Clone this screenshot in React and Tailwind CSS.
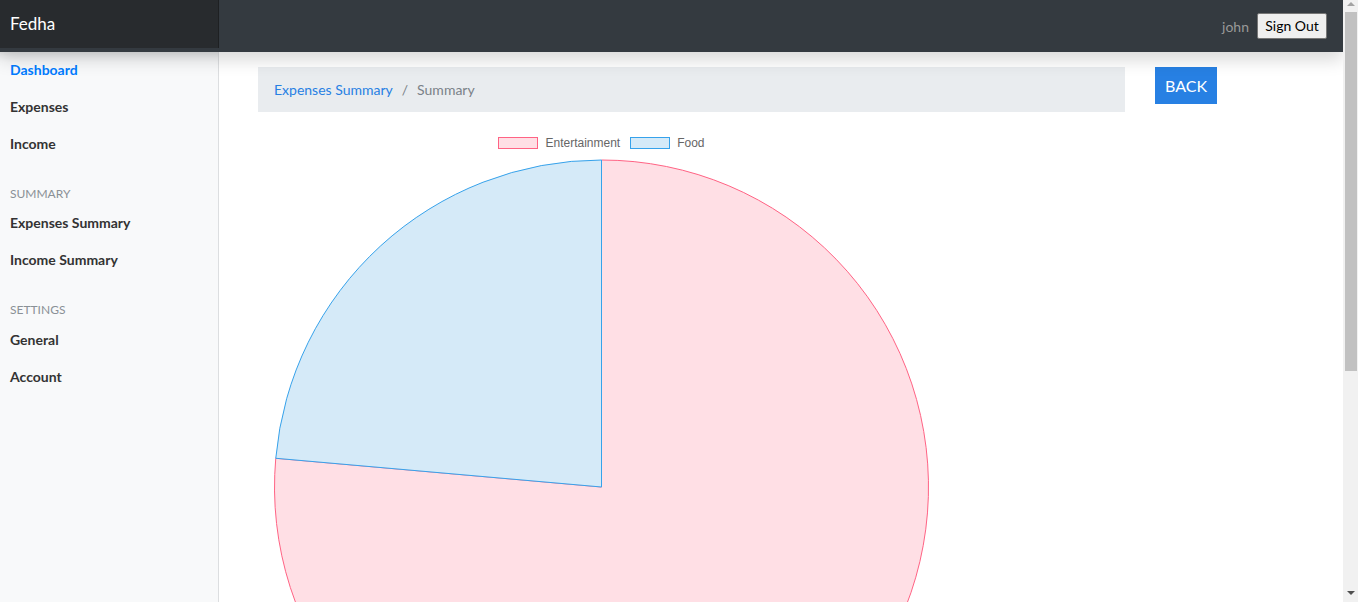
import React from 'react';

const font = { fontFamily: 'Lato, "Noto Sans", sans-serif' };

const mainLinks = [
    { label: 'Dashboard', active: true },
    { label: 'Expenses' },
    { label: 'Income' },
];

const sections = [
    { title: 'Summary', links: ['Expenses Summary', 'Income Summary'], gap: 'mb-[2px]' },
    { title: 'Settings', links: ['General', 'Account'], gap: 'mb-[3px]' },
];

const data = [
    { label: 'Entertainment', value: 76.4, fill: '#ffdfe5', stroke: '#ff6384' },
    { label: 'Food', value: 23.6, fill: '#d5eaf8', stroke: '#36a2eb' },
];

const NavLink = ({ label, active }) => (
    <a
        href="#"
        className={`block h-[37px] leading-[37px] px-[10px] text-[14px] font-bold ${active ? 'text-[#007bff]' : 'text-[#333]'}`}
    >
        {label}
    </a>
);

const Sidebar = () => (
    <nav className="w-[219px] shrink-0 bg-[#f8f9fa] border-r border-[#dcdee0] shadow-[inset_0_10px_10px_-8px_rgba(0,0,0,0.12)]">
        <div className="-mt-[1px]">
            {mainLinks.map((l) => (
                <NavLink key={l.label} {...l} />
            ))}
        </div>
        {sections.map((s) => (
            <div key={s.title}>
                <h6 className={`mt-[24px] ${s.gap} px-[10px] text-[12px] leading-[16px] uppercase text-[#8a9096]`}>{s.title}</h6>
                {s.links.map((l) => (
                    <NavLink key={l} label={l} />
                ))}
            </div>
        ))}
    </nav>
);

const PieChart = () => {
    const cx = 343.5;
    const cy = 328;
    const r = 327;
    const total = data.reduce((a, d) => a + d.value, 0);
    let start = -Math.PI / 2;
    const slices = data.map((d) => {
        const angle = (d.value / total) * Math.PI * 2;
        const end = start + angle;
        const x1 = cx + r * Math.cos(start);
        const y1 = cy + r * Math.sin(start);
        const x2 = cx + r * Math.cos(end);
        const y2 = cy + r * Math.sin(end);
        const large = angle > Math.PI ? 1 : 0;
        const path = `M ${cx} ${cy} L ${x1} ${y1} A ${r} ${r} 0 ${large} 1 ${x2} ${y2} Z`;
        start = end;
        return { ...d, path };
    });

    return (
        <div className="w-[687px] mt-[25px]">
            <div className="flex justify-center gap-[10px] h-[12px] items-center" style={{ fontFamily: '"Liberation Sans", Arial, sans-serif' }}>
                {data.map((d) => (
                    <div key={d.label} className="flex items-center gap-[7px]">
                        <span
                            className="w-[40px] h-[12px] border"
                            style={{ backgroundColor: d.fill, borderColor: d.stroke }}
                        />
                        <span className="text-[12px] leading-[12px] text-[#666]">{d.label}</span>
                    </div>
                ))}
            </div>
            <svg width="687" height="660" className="mt-[10px] block">
                {slices.map((s) => (
                    <path key={s.label} d={s.path} fill={s.fill} stroke={s.stroke} strokeWidth="1" />
                ))}
            </svg>
        </div>
    );
};

// browser-style vertical scrollbar
const ScrollBar = () => (
    <div className="w-[15px] shrink-0 h-screen bg-[#f1f1f1] flex flex-col">
        <div className="h-[12px] flex justify-center pt-[2px] pl-[1px]">
            <span className="w-0 h-0 border-x-[4px] border-x-transparent border-b-[4px] border-b-[#a3a3a3]" />
        </div>
        <div className="h-[359px] ml-[2px] mr-[1px] bg-[#c1c1c1]" />
        <div className="flex-1" />
        <div className="h-[17px] flex justify-center pt-[6px] pl-[1px]">
            <span className="w-0 h-0 border-x-[4px] border-x-transparent border-t-[4px] border-t-[#505050]" />
        </div>
    </div>
);

export default function App() {
    return (
        <div className="flex h-screen overflow-hidden bg-white" style={font}>
            <div className="flex-1 min-w-0 overflow-hidden">
                <header className="relative z-10 h-[52px] bg-[#343a40] flex items-start shadow-[0_8px_16px_rgba(0,0,0,0.15)]">
                    <a href="#" className="w-[219px] h-[48px] bg-[#282b2e] shadow-[inset_-1px_0_0_rgba(0,0,0,0.25)] text-white text-[17px] leading-[48px] px-[10px]">
                        Fedha
                    </a>
                    <div className="flex-1 h-[52px] flex items-center justify-end pr-[16px] gap-[8px]">
                        <span className="text-[14px] text-[#999]">john</span>
                        <button className="h-[26px] w-[70px] bg-[#efefef] border border-[#767676] rounded-[2px] text-[14px] text-black leading-none">
                            Sign Out
                        </button>
                    </div>
                </header>
                <div className="flex">
                    <Sidebar />
                    <main className="flex-1 pl-[39px] pt-[15px] pb-[136px]">
                        <div className="flex items-start gap-[30px]">
                            <ol className="w-[867px] h-[45px] bg-[#e9ecef] flex items-center px-[16px] text-[14px]">
                                <li>
                                    <a href="#" className="text-[#2780e3]">Expenses Summary</a>
                                </li>
                                <li className="text-[#7a8188] before:content-['/'] before:px-[9px] before:text-[#7a8188]">Summary</li>
                            </ol>
                            <button className="h-[37px] w-[62px] bg-[#2780e3] text-white text-[16px]">BACK</button>
                        </div>
                        <PieChart />
                    </main>
                </div>
            </div>
            <ScrollBar />
        </div>
    );
}
